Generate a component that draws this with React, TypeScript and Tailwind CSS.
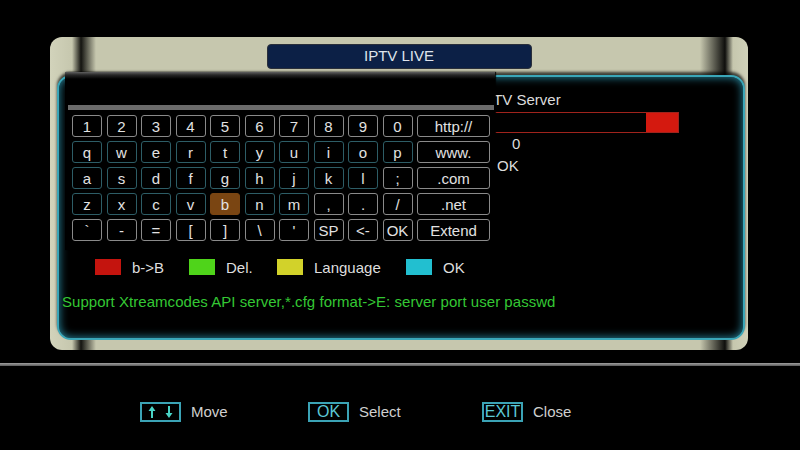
import React from 'react';

const ROWS: string[][] = [
  ['1', '2', '3', '4', '5', '6', '7', '8', '9', '0', 'http://'],
  ['q', 'w', 'e', 'r', 't', 'y', 'u', 'i', 'o', 'p', 'www.'],
  ['a', 's', 'd', 'f', 'g', 'h', 'j', 'k', 'l', ';', '.com'],
  ['z', 'x', 'c', 'v', 'b', 'n', 'm', ',', '.', '/', '.net'],
  ['`', '-', '=', '[', ']', '\\', "'", 'SP', '<-', 'OK', 'Extend'],
];

// how many keys from the left of each row carry the teal outline
const TEAL_COUNT = [0, 10, 9, 7, 0];

const LEGEND = [
  { color: 'bg-[#c4140e]', label: 'b->B', width: 'w-[94px]' },
  { color: 'bg-[#4fd41a]', label: 'Del.', width: 'w-[88px]' },
  { color: 'bg-[#d2d22a]', label: 'Language', width: 'w-[129px]' },
  { color: 'bg-[#22bfd0]', label: 'OK', width: 'w-[80px]' },
];

const Key: React.FC<{ label: string; wide: boolean; teal: boolean; selected: boolean }> = ({ label, wide, teal, selected }) => {
  let border = 'border-[#8a8a8a]';
  if (teal) border = 'border-[#2d5d66]';
  if (selected) border = 'border-[#7a4512]';
  return (
    <div
      className={`h-[22px] ${wide ? 'w-[73px]' : 'w-[30px]'} border ${border} rounded-[3px] flex items-center justify-center text-[15px] leading-none text-[#e2e2e2] ${selected ? 'bg-[#7a4512]' : ''}`}
    >
      {label}
    </div>
  );
};

const MoveIcon = () => (
  <svg width="37" height="16" viewBox="0 0 37 16">
    <path d="M10 2 L13.5 7 L11 7 L11 14 L9 14 L9 7 L6.5 7 Z" fill="#49d3c6" />
    <path d="M27 14 L23.5 9 L26 9 L26 2 L28 2 L28 9 L30.5 9 Z" fill="#49d3c6" />
  </svg>
);

const App: React.FC = () => {
  return (
    <div className="w-[800px] h-[450px] bg-black overflow-hidden flex flex-col font-['Liberation_Sans',Arial,sans-serif]">
      {/* main window frame */}
      <div className="mt-[37px] ml-[50px] w-[698px] h-[313px] relative rounded-[12px] flex flex-col bg-[linear-gradient(90deg,#d2d3bb_0px,#c6c7ae_22px,#141410_31px,#c6c7ae_46px,#c6c7ae_650px,#0e0e0c_675px,#c6c7ae_683px,#d0d1b9_698px)]">
        <div className="h-[38px] flex items-center justify-center">
          <div className="w-[265px] h-[25px] rounded-[4px] bg-[#0c2046] border border-[#2a2f3a] flex items-center justify-center text-[15px] text-[#dfe4ec]">
            IPTV LIVE
          </div>
        </div>

        {/* panel behind the keyboard */}
        <div className="ml-[7px] mr-[3px] h-[265px] rounded-[14px] bg-black border-2 border-[#3aa6b8] shadow-[inset_0_0_10px_rgba(50,170,200,0.85),0_-3px_3px_rgba(0,0,0,0.7)] flex flex-col">
          <div className="pl-[420px] pt-[14px] flex flex-col">
            <div className="h-[18px] text-[15px] leading-[18px] text-[#dcdcdc]">IPTV Server</div>
            <div className="mt-[3px] w-[200px] h-[21px] border border-[#a0231c] flex justify-end">
              <div className="w-[32px] h-full bg-[#d4190f]" />
            </div>
            <div className="mt-[2px] pl-[33px] h-[18px] text-[15px] leading-[18px] text-[#dcdcdc]">0</div>
            <div className="mt-[4px] pl-[18px] h-[18px] text-[15px] leading-[18px] text-[#dcdcdc]">OK</div>
          </div>

          <div className="mt-[84px] pl-[36px] flex items-center h-[16px]">
            {LEGEND.map((item) => (
              <div key={item.label} className={`${item.width} flex items-center gap-[11px]`}>
                <div className={`w-[26px] h-[16px] ${item.color}`} />
                <span className="text-[15px] leading-none text-[#dedede]">{item.label}</span>
              </div>
            ))}
          </div>

          <div className="mt-[18px] pl-[3px] h-[18px] text-[15px] leading-[18px] text-[#34c834] whitespace-nowrap tracking-[0.04px]">
            Support Xtreamcodes API server,*.cfg format-&gt;E: server port user passwd
          </div>
        </div>
        <div className="h-[10px]" />

        {/* on-screen keyboard overlay */}
        <div className="absolute left-[15px] top-[35px] w-[430px] h-[178px] bg-[linear-gradient(to_bottom,#606060_0px,#262626_3px,#000_7px)] shadow-[1px_0_1px_rgba(0,0,0,0.8)]">
          <div className="mt-[33px] ml-[3px] w-[426px] h-[5px] bg-[#6b6b6b]" />
          <div className="mt-[5px] ml-[7px] flex flex-col gap-y-[4px]">
            {ROWS.map((row, r) => (
              <div key={r} className="flex gap-x-[4.5px]">
                {row.map((k, c) => (
                  <Key
                    key={c}
                    label={k}
                    wide={c === 10}
                    teal={c < TEAL_COUNT[r]}
                    selected={r === 3 && c === 4}
                  />
                ))}
              </div>
            ))}
          </div>
        </div>
      </div>

      {/* divider */}
      <div className="mt-[13px] h-[3px] bg-[linear-gradient(to_bottom,#a0a0a0,#5a5a5a)]" />

      {/* key hints */}
      <div className="mt-[36px] flex items-center h-[20px] text-[15px] text-[#cfcfcf]">
        <div className="ml-[140px] w-[168px] flex items-center gap-[10px]">
          <div className="w-[41px] h-[20px] border-2 border-[#3ba3b5] flex items-center justify-center">
            <MoveIcon />
          </div>
          <span>Move</span>
        </div>
        <div className="w-[174px] flex items-center gap-[10px]">
          <div className="w-[41px] h-[20px] border-2 border-[#3ba3b5] flex items-center justify-center text-[16px] leading-none text-[#5cc8d6]">
            OK
          </div>
          <span>Select</span>
        </div>
        <div className="flex items-center gap-[10px]">
          <div className="w-[41px] h-[20px] border-2 border-[#3ba3b5] flex items-center justify-center text-[16px] leading-none text-[#5cc8d6]">
            EXIT
          </div>
          <span>Close</span>
        </div>
      </div>
    </div>
  );
};

export default App;
